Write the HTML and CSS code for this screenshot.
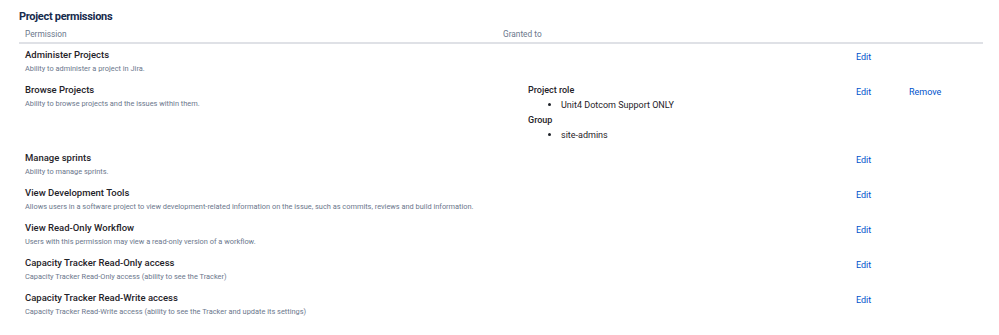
FILE: index.html
```html
<!DOCTYPE html>
<html lang="en">
<head>
  <meta charset="UTF-8">
  <title>Project permissions</title>
  <link rel="stylesheet" href="styles.css">
</head>
<body>
  <div class="page">
    <h2 class="page-title">Project permissions</h2>
    <table class="perm-table">
      <colgroup>
        <col class="col-perm">
        <col class="col-granted">
        <col class="col-edit">
        <col class="col-remove">
      </colgroup>
      <thead>
        <tr>
          <th>Permission</th>
          <th>Granted to</th>
          <th></th>
          <th></th>
        </tr>
      </thead>
      <tbody>
        <tr>
          <td>
            <div class="perm-name">Administer Projects</div>
            <div class="perm-desc">Ability to administer a project in Jira.</div>
          </td>
          <td></td>
          <td><a href="#" class="action">Edit</a></td>
          <td></td>
        </tr>
        <tr>
          <td>
            <div class="perm-name">Browse Projects</div>
            <div class="perm-desc">Ability to browse projects and the issues within them.</div>
          </td>
          <td>
            <dl class="grants">
              <dt>Project role</dt>
              <dd><ul><li>Unit4 Dotcom Support ONLY</li></ul></dd>
              <dt>Group</dt>
              <dd><ul><li>site-admins</li></ul></dd>
            </dl>
          </td>
          <td><a href="#" class="action">Edit</a></td>
          <td><a href="#" class="action">Remove</a></td>
        </tr>
        <tr>
          <td>
            <div class="perm-name">Manage sprints</div>
            <div class="perm-desc">Ability to manage sprints.</div>
          </td>
          <td></td>
          <td><a href="#" class="action">Edit</a></td>
          <td></td>
        </tr>
        <tr>
          <td>
            <div class="perm-name">View Development Tools</div>
            <div class="perm-desc">Allows users in a software project to view development-related information on the issue, such as commits, reviews and build information.</div>
          </td>
          <td></td>
          <td><a href="#" class="action">Edit</a></td>
          <td></td>
        </tr>
        <tr>
          <td>
            <div class="perm-name">View Read-Only Workflow</div>
            <div class="perm-desc">Users with this permission may view a read-only version of a workflow.</div>
          </td>
          <td></td>
          <td><a href="#" class="action">Edit</a></td>
          <td></td>
        </tr>
        <tr>
          <td>
            <div class="perm-name">Capacity Tracker Read-Only access</div>
            <div class="perm-desc">Capacity Tracker Read-Only access (ability to see the Tracker)</div>
          </td>
          <td></td>
          <td><a href="#" class="action">Edit</a></td>
          <td></td>
        </tr>
        <tr>
          <td>
            <div class="perm-name">Capacity Tracker Read-Write access</div>
            <div class="perm-desc">Capacity Tracker Read-Write access (ability to see the Tracker and update its settings)</div>
          </td>
          <td></td>
          <td><a href="#" class="action">Edit</a></td>
          <td></td>
        </tr>
      </tbody>
    </table>
  </div>
</body>
</html>
```

FILE: styles.css
```css
body {
  margin: 0;
  font-family: Roboto, "Noto Sans", sans-serif;
  background-color: #fff;
  color: #172b4d;
}

.page {
  padding: 10px 0 0 19px;
  width: 964px;
}

.page-title {
  margin: 0;
  font-size: 11px;
  font-weight: 700;
  line-height: 14px;
  letter-spacing: -0.3px;
  color: #172b4d;
}

.perm-table {
  width: 964px;
  border-collapse: collapse;
  table-layout: fixed;
  margin-top: 2px;
}

.col-perm { width: 478px; }
.col-granted { width: 353px; }
.col-edit { width: 53px; }
.col-remove { width: 80px; }

.perm-table th {
  text-align: left;
  font-weight: 400;
  font-size: 8.3px;
  line-height: 12px;
  color: #6b778c;
  padding: 2px 6px 2px;
  border-bottom: 2px solid #dfe1e6;
}

.perm-table td {
  vertical-align: top;
  padding: 4px 6px 4px;
  line-height: 14px;
}

.perm-name {
  font-size: 9.5px;
  font-weight: 500;
  line-height: 14px;
  color: #1f2329;
}

.perm-desc {
  font-size: 7.4px;
  line-height: 13px;
  color: #6b778c;
}

.action {
  display: block;
  margin-top: 2px;
  font-size: 9px;
  line-height: 14px;
  color: #0052cc;
  text-decoration: none;
}

.grants {
  margin: 0 0 0 25px;
  font-size: 9px;
  line-height: 15px;
  color: #1f2329;
}

.grants dt {
  font-weight: 500;
}

.grants dd {
  margin: 0;
}

.grants ul {
  margin: 0;
  padding: 0;
  list-style: none;
}

.grants li {
  padding-left: 20px;
}

.grants li::before {
  content: "";
  display: inline-block;
  width: 3px;
  height: 3px;
  border-radius: 50%;
  background-color: #1f2329;
  margin: 0 10px 2px 0;
  vertical-align: middle;
}
```
